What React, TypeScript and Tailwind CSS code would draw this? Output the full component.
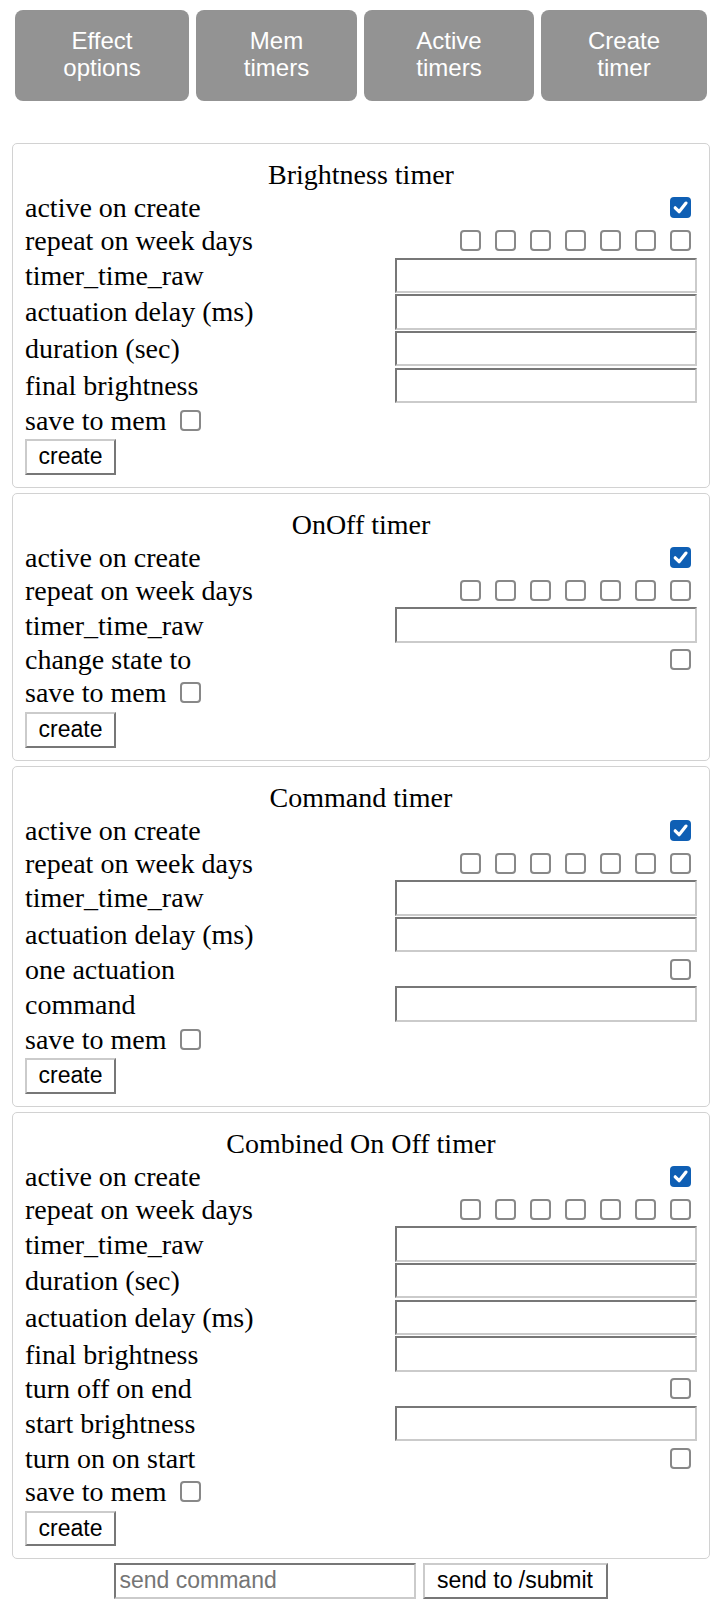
import React from "react";

type Kind = "check" | "checked" | "days" | "input";
type Row = { label: string; kind: Kind };

const tabs = [
  { top: "Effect", bottom: "options", w: "w-[174px]" },
  { top: "Mem", bottom: "timers", w: "w-[161px]" },
  { top: "Active", bottom: "timers", w: "w-[170px]" },
  { top: "Create", bottom: "timer", w: "w-[166px]" },
];

const head: Row[] = [
  { label: "active on create", kind: "checked" },
  { label: "repeat on week days", kind: "days" },
  { label: "timer_time_raw", kind: "input" },
];

const cards: { title: string; rows: Row[] }[] = [
  {
    title: "Brightness timer",
    rows: [
      ...head,
      { label: "actuation delay (ms)", kind: "input" },
      { label: "duration (sec)", kind: "input" },
      { label: "final brightness", kind: "input" },
    ],
  },
  {
    title: "OnOff timer",
    rows: [...head, { label: "change state to", kind: "check" }],
  },
  {
    title: "Command timer",
    rows: [
      ...head,
      { label: "actuation delay (ms)", kind: "input" },
      { label: "one actuation", kind: "check" },
      { label: "command", kind: "input" },
    ],
  },
  {
    title: "Combined On Off timer",
    rows: [
      ...head,
      { label: "duration (sec)", kind: "input" },
      { label: "actuation delay (ms)", kind: "input" },
      { label: "final brightness", kind: "input" },
      { label: "turn off on end", kind: "check" },
      { label: "start brightness", kind: "input" },
      { label: "turn on on start", kind: "check" },
    ],
  },
];

// inset / outset borders like the browser's default form controls
const inset =
  "border-2 border-t-[#777777] border-l-[#777777] border-b-[#cbcbcb] border-r-[#cbcbcb] bg-white outline-none";
const outset =
  "border-2 border-t-[#cbcbcb] border-l-[#cbcbcb] border-b-[#777777] border-r-[#777777] bg-white";

function Box({ checked = false }: { checked?: boolean }) {
  if (checked) {
    return (
      <span className="flex h-[21px] w-[21px] items-center justify-center rounded-[4px] bg-[#0f5fb4]">
        <svg viewBox="0 0 21 21" className="h-[21px] w-[21px]">
          <path
            d="M5.2 10.8l3.9 3.9 6.9-8.6"
            fill="none"
            stroke="white"
            strokeWidth="3.2"
            strokeLinecap="round"
            strokeLinejoin="round"
          />
        </svg>
      </span>
    );
  }
  return <span className="block h-[21px] w-[21px] rounded-[4px] border-2 border-[#888888] bg-white" />;
}

function TimerCard({ title, rows }: { title: string; rows: Row[] }) {
  return (
    <section className="mt-[5px] w-[698px] rounded-[5px] border border-[#d2d2d2] px-[12px] pt-[14px] pb-[12px] first:mt-0">
      <h2 className="text-center text-[28px] leading-[33px] font-normal">{title}</h2>

      {rows.map((row, i) =>
        row.kind === "input" ? (
          <div key={i} className="flex h-[36.67px] items-center justify-between">
            <span className="leading-[33px]">{row.label}</span>
            <input type="text" className={`h-[35.5px] w-[302px] px-[3px] ${inset}`} />
          </div>
        ) : (
          <div key={i} className="flex h-[33px] items-center justify-between">
            <span className="leading-[33px]">{row.label}</span>
            <div className="mr-[6px] flex gap-[14px]">
              {row.kind === "days" ? (
                [0, 1, 2, 3, 4, 5, 6].map((d) => <Box key={d} />)
              ) : (
                <Box checked={row.kind === "checked"} />
              )}
            </div>
          </div>
        )
      )}

      <div className="flex h-[33px] items-center">
        <span className="leading-[33px]">save to mem</span>
        <span className="ml-[13.5px]">
          <Box />
        </span>
      </div>

      <button
        className={`mt-[2.5px] block h-[35.67px] w-[91px] font-['Liberation_Sans',Arial,sans-serif] text-[23px] leading-none text-black ${outset}`}
      >
        create
      </button>
    </section>
  );
}

export default function App() {
  return (
    <div className="min-h-[1618px] bg-white pb-[18px] font-['Liberation_Serif','Times_New_Roman',serif] text-[28px] text-black">
      <nav className="ml-[15px] flex gap-[7px] pt-[10px]">
        {tabs.map((t) => (
          <button
            key={t.top}
            className={`${t.w} flex h-[91px] flex-col items-center justify-center rounded-[8px] bg-[#939393] pb-[3px] font-['Liberation_Sans',Arial,sans-serif] text-[24px] leading-[27px] text-white`}
          >
            <span>{t.top}</span>
            <span>{t.bottom}</span>
          </button>
        ))}
      </nav>

      <main className="ml-[12px] mt-[42px] flex flex-col">
        {cards.map((c) => (
          <TimerCard key={c.title} title={c.title} rows={c.rows} />
        ))}
      </main>

      <div className="mt-[4px] flex justify-center gap-[7px] font-['Liberation_Sans',Arial,sans-serif] text-[23px]">
        <input
          type="text"
          placeholder="send command"
          className={`h-[35.67px] w-[302px] px-[4px] placeholder:text-[#757575] ${inset}`}
        />
        <button className={`h-[35.67px] w-[185px] leading-none text-black ${outset}`}>send to /submit</button>
      </div>
    </div>
  );
}
